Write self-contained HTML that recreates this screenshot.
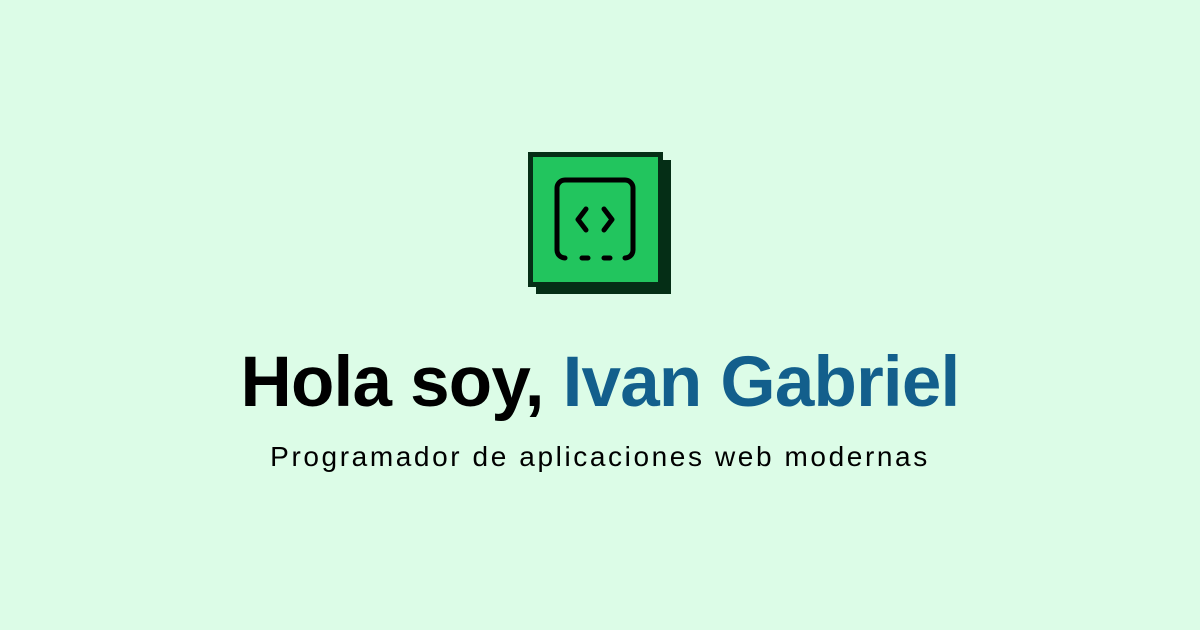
<!DOCTYPE html>
<html><head><meta charset="utf-8"><style>
html,body{margin:0;padding:0}
body{width:1200px;height:630px;background:#dcfce7;position:relative;overflow:hidden;font-family:"Liberation Sans",sans-serif}
.sh{position:absolute;left:536px;top:160px;width:135px;height:134px;background:#052e16}
.bx{position:absolute;left:528px;top:152px;width:125px;height:125px;background:#22c55e;border:5px solid #052e16}
h1{position:absolute;left:0;width:1200px;top:338px;margin:0;text-align:center;font-size:71px;font-weight:bold;letter-spacing:-0.8px;color:#000;line-height:90px}
h1 span{color:#135f8c}
p{position:absolute;left:0;width:1200px;top:439px;margin:0;text-align:center;font-size:28px;letter-spacing:2.6px;color:#000;line-height:36px}
</style></head><body>
<div class="sh"></div>
<div class="bx"></div>
<svg style="position:absolute;left:0;top:0" width="1200" height="630">
<g fill="none" stroke="#000" stroke-width="5" stroke-linecap="round" stroke-linejoin="round">
<path d="M565 258 A8 8 0 0 1 557 250 V188 A8 8 0 0 1 565 180 H625 A8 8 0 0 1 633 188 V250 A8 8 0 0 1 625 258"/>
<path d="M582 258 H588 M604 258 H610"/>
<path d="M586 209 L578 219.5 L586 230"/>
<path d="M604 209 L612 219.5 L604 230"/>
</g></svg>
<h1>Hola soy, <span>Ivan Gabriel</span></h1>
<p>Programador de aplicaciones web modernas</p>
</body></html>
